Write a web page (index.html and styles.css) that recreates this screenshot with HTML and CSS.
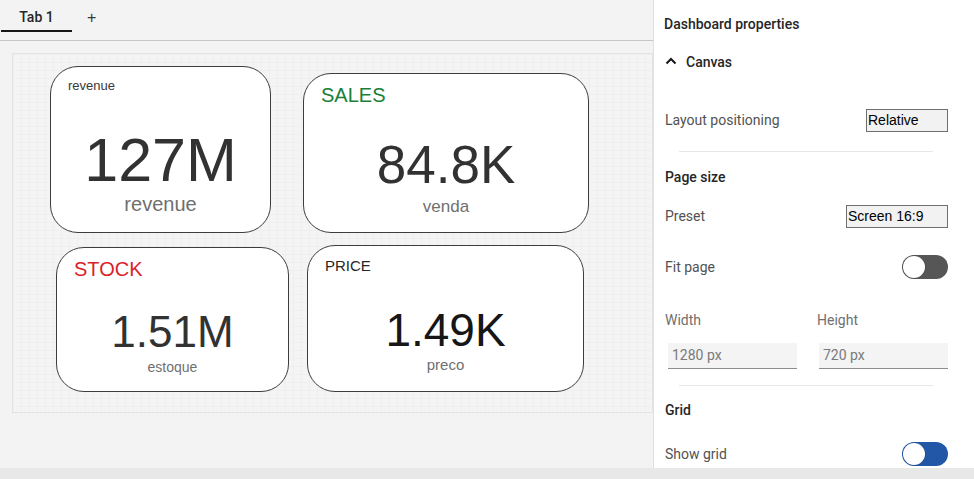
FILE: index.html
```html
<!DOCTYPE html>
<html lang="en">
<head>
<meta charset="utf-8">
<title>Dashboard</title>
<link rel="stylesheet" href="styles.css">
</head>
<body>
<div class="app">
  <main class="workspace">
    <div class="tabbar">
      <div class="tab">Tab 1</div>
      <div class="tab-add">+</div>
    </div>
    <div class="canvas-wrap">
      <div class="canvas">
        <div class="card card-1">
          <div class="card-title t-rev">revenue</div>
          <div class="card-value v-rev">127M</div>
          <div class="card-sub s-rev">revenue</div>
        </div>
        <div class="card card-2">
          <div class="card-title t-sales">SALES</div>
          <div class="card-value v-sales">84.8K</div>
          <div class="card-sub s-sales">venda</div>
        </div>
        <div class="card card-3">
          <div class="card-title t-stock">STOCK</div>
          <div class="card-value v-stock">1.51M</div>
          <div class="card-sub s-stock">estoque</div>
        </div>
        <div class="card card-4">
          <div class="card-title t-price">PRICE</div>
          <div class="card-value v-price">1.49K</div>
          <div class="card-sub s-price">preco</div>
        </div>
      </div>
    </div>
  </main>
  <aside class="panel">
    <div class="panel-title">Dashboard properties</div>
    <div class="section-head">
      <svg class="chev" width="12" height="8" viewBox="0 0 12 8"><path d="M1.5 6.5 L6 2 L10.5 6.5" fill="none" stroke="#161616" stroke-width="2"/></svg>
      <span>Canvas</span>
    </div>
    <div class="row row-layout">
      <span class="label">Layout positioning</span>
      <span class="select sel-rel">Relative</span>
    </div>
    <div class="divider d1"></div>
    <div class="group-title g-page">Page size</div>
    <div class="row row-preset">
      <span class="label">Preset</span>
      <span class="select sel-preset">Screen 16:9</span>
    </div>
    <div class="row row-fit">
      <span class="label">Fit page</span>
      <span class="toggle toggle-dark"><span class="knob"></span></span>
    </div>
    <div class="dims">
      <span class="dim-label">Width</span>
      <span class="dim-label">Height</span>
      <span class="dim-input in-w">1280 px</span>
      <span class="dim-input in-h">720 px</span>
    </div>
    <div class="divider d2"></div>
    <div class="group-title g-grid">Grid</div>
    <div class="row row-grid">
      <span class="label">Show grid</span>
      <span class="toggle toggle-blue"><span class="knob"></span></span>
    </div>
  </aside>
  <div class="statusbar"></div>
</div>
</body>
</html>
```
FILE: styles.css
```css
* { box-sizing: border-box; }
html, body { margin: 0; padding: 0; }
body {
  width: 974px;
  height: 479px;
  overflow: hidden;
  background: #f3f3f3;
  font-family: Roboto, "Liberation Sans", Arial, sans-serif;
  color: #161616;
}
.app {
  display: grid;
  grid-template-columns: 653px 321px;
  grid-template-rows: 468px 11px;
  height: 479px;
}
.workspace {
  background: #f3f3f3;
  display: flex;
  flex-direction: column;
}
.tabbar {
  height: 41px;
  border-bottom: 1px solid #c6c6c6;
  display: flex;
  align-items: flex-start;
  padding-left: 1px;
}
.tab {
  width: 71px;
  height: 32px;
  padding-top: 7px;
  line-height: 20px;
  font-size: 14px;
  font-weight: 500;
  color: #262626;
  text-align: center;
  border-bottom: 2px solid #161616;
}
.tab-add {
  margin-left: 15px;
  margin-top: 8px;
  font-size: 16px;
  line-height: 20px;
  color: #393939;
  font-family: "Liberation Sans", Arial, sans-serif;
}
.canvas-wrap {
  padding: 12px 0 0 12px;
}
.canvas {
  position: relative;
  width: 641px;
  height: 360px;
  border: 1px solid #e3e3e3;
  background-color: #f4f4f4;
  background-image:
    linear-gradient(to right, #efefef 1px, transparent 1px),
    linear-gradient(to bottom, #efefef 1px, transparent 1px);
  background-size: 8px 8px;
}
.card {
  position: absolute;
  background: #ffffff;
  border: 1px solid #3d3d3d;
  border-radius: 28px;
  display: flex;
  flex-direction: column;
  font-family: "Liberation Sans", Arial, sans-serif;
  padding-left: 17px;
  padding-right: 17px;
}
.card-1 { left: 37px; top: 12px; width: 221px; height: 167px; }
.card-2 { left: 290px; top: 19px; width: 286px; height: 160px; }
.card-3 { left: 43px; top: 193px; width: 233px; height: 145px; }
.card-4 { left: 294px; top: 191px; width: 277px; height: 147px; }

.card-title, .card-value, .card-sub { line-height: 1; white-space: nowrap; }
.card-value, .card-sub { text-align: center; }
.card-value { color: #323232; }
.card-sub { color: #6f6f6f; }

.t-rev { font-size: 13px; margin-top: 12px; color: #393939; }
.v-rev { font-size: 61px; margin-top: 38px; }
.s-rev { font-size: 20px; margin-top: 3px; }

.t-sales { font-size: 20px; margin-top: 11px; color: #198038; }
.v-sales { font-size: 53px; margin-top: 33px; }
.s-sales { font-size: 17px; margin-top: 7px; }

.t-stock { font-size: 20px; margin-top: 11px; color: #da1e28; }
.v-stock { font-size: 44px; margin-top: 31px; }
.s-stock { font-size: 14px; margin-top: 6px; }

.t-price { font-size: 15px; margin-top: 12px; color: #262626; }
.v-price { font-size: 46px; margin-top: 34px; color: #161616; }
.s-price { font-size: 15px; margin-top: 4px; }

.panel {
  background: #ffffff;
  border-left: 1px solid #e0e0e0;
  padding: 14px 26px 0 10px;
  display: flex;
  flex-direction: column;
  font-size: 14px;
  line-height: 20px;
}
.panel-title {
  font-weight: 500;
  color: #262626;
}
.section-head {
  margin-top: 18px;
  display: flex;
  align-items: center;
  font-weight: 500;
  color: #262626;
}
.chev { margin-left: 1px; margin-right: 9px; margin-top: -2px; }
.row {
  display: flex;
  align-items: center;
  justify-content: space-between;
  height: 24px;
}
.label { color: #525252; padding-left: 1px; }
.row-layout { margin-top: 36px; }
.row-preset { margin-top: 17px; }
.row-fit { margin-top: 27px; }
.row-grid { margin-top: 22px; }
.select {
  height: 23px;
  border: 1px solid #6f6f6f;
  background: #f2f2f2;
  font-family: "Liberation Sans", Arial, sans-serif;
  font-size: 14px;
  line-height: 21px;
  color: #000;
  padding-left: 1px;
}
.sel-rel { width: 82px; }
.sel-preset { width: 102px; }
.divider {
  height: 1px;
  background: #e6e6e6;
  margin-left: 15px;
  width: 254px;
}
.d1 { margin-top: 19px; }
.d2 { margin-top: 16px; }
.group-title { font-weight: 500; color: #262626; padding-left: 1px; }
.g-page { margin-top: 15px; }
.g-grid { margin-top: 14px; }
.toggle {
  position: relative;
  width: 46px;
  height: 24px;
  border-radius: 12px;
}
.toggle-dark { background: #565656; }
.toggle-blue { background: #2157a6; }
.knob {
  position: absolute;
  left: 1px;
  top: 1px;
  width: 22px;
  height: 22px;
  border-radius: 50%;
  background: #ffffff;
  box-shadow: 0 0 0 0.5px rgba(0,0,0,0.15);
}
.dims {
  margin-top: 31px;
  display: grid;
  grid-template-columns: 132px 132px;
  column-gap: 20px;
  row-gap: 13px;
}
.dim-label { color: #6f6f6f; padding-left: 1px; }
.dim-input {
  height: 26px;
  width: 129px;
  background: #f4f4f4;
  border-bottom: 1px solid #8d8d8d;
  color: #7a7a7a;
  line-height: 25px;
  padding-left: 4px;
}
.in-w { margin-left: 4px; }
.in-h { margin-left: 3px; }
.statusbar {
  grid-column: 1 / 3;
  background: #e8e8e8;
}
```
